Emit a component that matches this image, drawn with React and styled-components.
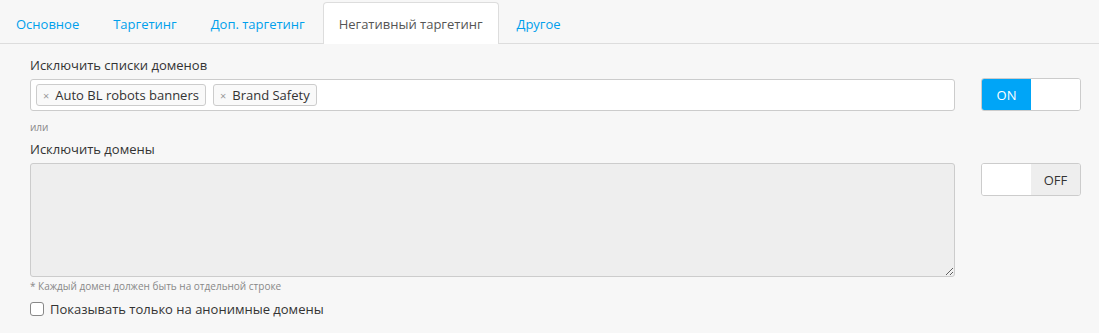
import styled, { createGlobalStyle } from "styled-components";

const GlobalStyle = createGlobalStyle`
  body {
    margin: 0;
    background: #f7f7f7;
    font-family: "Open Sans", "Liberation Sans", sans-serif;
    color: #333;
  }
`;

const Page = styled.div`
  width: 1099px;
  height: 333px;
  background: #f7f7f7;
`;

const Tabs = styled.ul`
  display: flex;
  margin: 0;
  padding: 2px 0 0 0;
  list-style: none;
  border-bottom: 1px solid #ddd;
  height: 41px;
`;

const Tab = styled.li`
  padding: 0 15px;
  margin-right: 2px;
  margin-bottom: -1px;
  display: flex;
  align-items: center;
  font-size: 13px;
  height: 42px;
  box-sizing: border-box;
  color: ${(p) => (p.$active ? "#555" : "#00a0ec")};
  background: ${(p) => (p.$active ? "#fff" : "transparent")};
  border: 1px solid ${(p) => (p.$active ? "#ddd" : "transparent")};
  border-bottom: none;
  border-radius: 4px 4px 0 0;
`;

const Body = styled.div`
  padding: 13px 18px 0 30px;
  display: flex;
  flex-direction: column;
`;

const Row = styled.div`
  display: flex;
  gap: 26px;
  align-items: flex-start;
`;

const Main = styled.div`
  flex: 1;
  display: flex;
  flex-direction: column;
`;

const Label = styled.div`
  font-size: 13px;
  color: #333;
  line-height: 16px;
  margin-bottom: 6px;
`;

const TagInput = styled.div`
  height: 32px;
  box-sizing: border-box;
  background: #fff;
  border: 1px solid #ccc;
  border-radius: 3px;
  display: flex;
  align-items: center;
  gap: 7px;
  padding: 0 5px;
`;

const Tag = styled.span`
  display: inline-flex;
  align-items: center;
  height: 22px;
  box-sizing: border-box;
  padding: 0 6px;
  border: 1px solid #ccc;
  border-radius: 3px;
  background: #f9f9f9;
  font-size: 13px;
  color: #333;
`;

const TagX = styled.span`
  color: #999;
  font-size: 11px;
  margin-right: 6px;
`;

const Small = styled.div`
  font-size: 10px;
  color: #888;
  line-height: 14px;
  margin: ${(p) => p.$margin};
`;

const Area = styled.textarea`
  height: 114px;
  box-sizing: border-box;
  background: #eee;
  border: 1px solid #ccc;
  border-radius: 3px;
  width: 100%;
  margin: 0;
  display: block;
  font-family: inherit;
`;

const Toggle = styled.div`
  width: 100px;
  height: 33px;
  box-sizing: border-box;
  border: 1px solid #ccc;
  border-radius: 3px;
  display: flex;
  overflow: hidden;
  margin-top: ${(p) => p.$top}px;
  background: #fff;
`;

const Half = styled.div`
  flex: 1;
  display: flex;
  align-items: center;
  justify-content: center;
  font-size: 13px;
  background: ${(p) => p.$bg || "#fff"};
  color: ${(p) => p.$color || "#333"};
`;

const CheckRow = styled.label`
  display: flex;
  align-items: center;
  gap: 6px;
  font-size: 13px;
  color: #333;
  margin-top: 7px;
`;

const Box = styled.span`
  width: 12px;
  height: 12px;
  border: 1px solid #888;
  border-radius: 3px;
  background: #fff;
  display: inline-block;
`;

export default function App() {
  return (
    <Page>
      <GlobalStyle />
      <Tabs>
        <Tab>Основное</Tab>
        <Tab>Таргетинг</Tab>
        <Tab>Доп. таргетинг</Tab>
        <Tab $active>Негативный таргетинг</Tab>
        <Tab>Другое</Tab>
      </Tabs>
      <Body>
        <Row>
          <Main>
            <Label>Исключить списки доменов</Label>
            <TagInput>
              <Tag>
                <TagX>×</TagX>Auto BL robots banners
              </Tag>
              <Tag>
                <TagX>×</TagX>Brand Safety
              </Tag>
            </TagInput>
            <Small $margin="9px 0 7px">или</Small>
            <Label>Исключить домены</Label>
          </Main>
          <Toggle $top={21}>
            <Half $bg="#00a5f7" $color="#fff">ON</Half>
            <Half />
          </Toggle>
        </Row>
        <Row>
          <Main>
            <Area />
            <Small $margin="2px 0 0">* Каждый домен должен быть на отдельной строке</Small>
            <CheckRow>
              <Box />
              Показывать только на анонимные домены
            </CheckRow>
          </Main>
          <Toggle $top={0}>
            <Half />
            <Half $bg="#eee">OFF</Half>
          </Toggle>
        </Row>
      </Body>
    </Page>
  );
}
